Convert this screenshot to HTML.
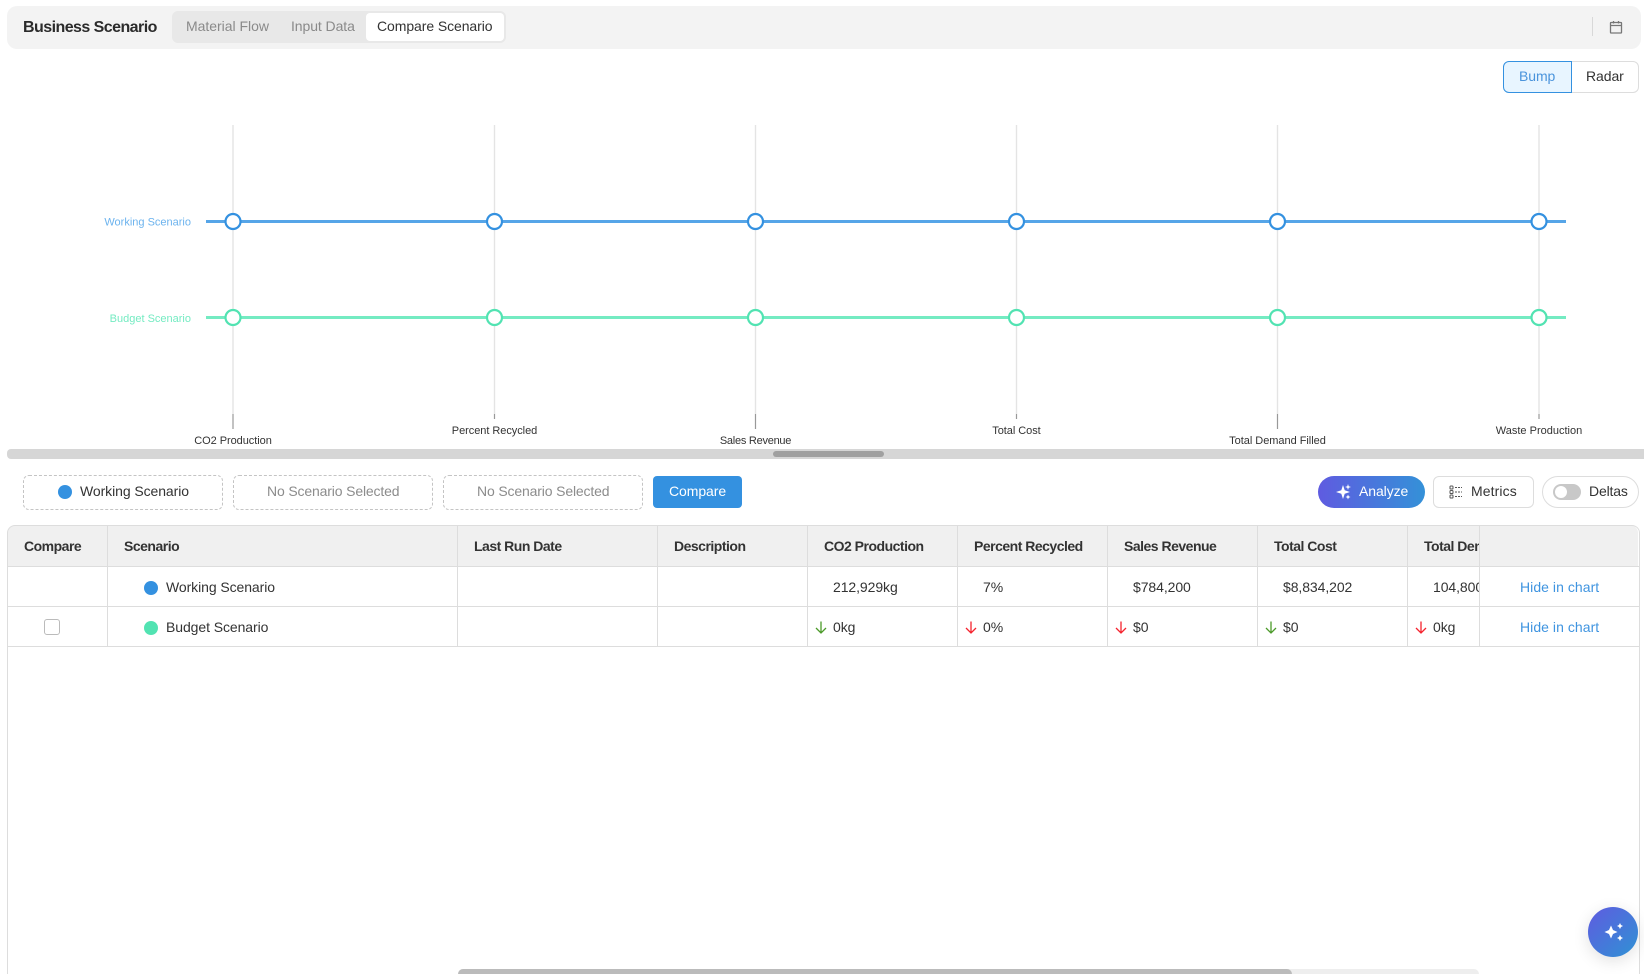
<!DOCTYPE html>
<html lang="en">
<head>
<meta charset="utf-8">
<title>Business Scenario</title>
<style>
html,body{margin:0;padding:0;background:#fff;width:1644px;height:974px;overflow:hidden;}
body{position:relative;font-family:"Liberation Sans",Arial,sans-serif;font-size:14px;color:#333;}
#w{position:absolute;left:0;top:0;width:1644px;height:974px;overflow:hidden;}
.a{position:absolute;}
.t{position:absolute;white-space:nowrap;line-height:20px;height:20px;letter-spacing:-.08px;}
.th{font-weight:bold;letter-spacing:-.5px;color:#333;}
.dash{position:absolute;top:475px;height:33px;border:1px dashed #c4c4c4;border-radius:6px;}
.h{position:absolute;background:#ddd;height:1px;}
.v{position:absolute;background:#ddd;width:1px;}
.dot{position:absolute;width:14px;height:14px;border-radius:50%;}
svg{position:absolute;overflow:visible;}
</style>
</head>
<body>
<div id="w">
<!-- Top bar -->
<div class="a" style="left:7px;top:6px;width:1634px;height:43px;background:#f3f3f3;border-radius:10px;"></div>
<div class="t" style="left:23px;top:18px;font-size:16px;font-weight:bold;letter-spacing:-.55px;color:#2b2b2b;">Business Scenario</div>
<div class="a" style="left:172px;top:11px;width:334px;height:32px;background:#e8e8e8;border-radius:6px;"></div>
<div class="a" style="left:366px;top:13px;width:138px;height:28px;background:#fff;border-radius:4px;"></div>
<div class="t" style="left:186px;top:16px;color:#8a8a8a;letter-spacing:-.02px;">Material Flow</div>
<div class="t" style="left:291px;top:16px;color:#8a8a8a;">Input Data</div>
<div class="t" style="left:377px;top:16px;color:#333;">Compare Scenario</div>
<div class="a" style="left:1592px;top:17px;width:1px;height:19px;background:#d8d8d8;"></div>
<svg style="left:1609px;top:20px;" width="14" height="14" viewBox="0 0 14 14" fill="none" stroke="#777" stroke-width="1.3">
  <rect x="1.500" y="2.500" width="11" height="10.500" rx=".5"/>
  <path d="M1.500 5.500H12.500M4.500 1V3.500M9.500 1V3.500"/>
</svg>

<!-- Bump/Radar -->
<div class="a" style="left:1572px;top:61px;width:66px;height:30px;border:1px solid #ddd;border-left:0;border-radius:0 6px 6px 0;"></div>
<div class="a" style="left:1503px;top:61px;width:67px;height:30px;border:1px solid #3491e0;background:#e8f5ff;border-radius:6px 0 0 6px;"></div>
<div class="t" style="left:1519px;top:66px;color:#4a94dc;">Bump</div>
<div class="t" style="left:1586px;top:66px;color:#333;">Radar</div>

<!-- Chart -->
<svg style="left:0;top:0;" width="1644" height="450" viewBox="0 0 1644 450" font-family="Liberation Sans, Arial, sans-serif">
  <g stroke="#e4e4e4" stroke-width="1.4">
    <path d="M233 125V414M494.500 125V414M755.500 125V414M1016.500 125V414M1277.500 125V414M1539 125V414"/>
  </g>
  <g stroke="#999" stroke-width="1.2">
    <path d="M233 414V429M494.500 414V419M755.500 414V429M1016.500 414V419M1277.500 414V429M1539 414V419"/>
  </g>
  <path d="M206 221.500H1566" stroke="#56a5e8" stroke-width="3"/>
  <path d="M206 317.500H1566" stroke="#74ebc2" stroke-width="3"/>
  <g fill="#fff" stroke="#3491e0" stroke-width="2.2">
    <circle cx="233" cy="221.500" r="7.500"/><circle cx="494.500" cy="221.500" r="7.500"/><circle cx="755.500" cy="221.500" r="7.500"/><circle cx="1016.500" cy="221.500" r="7.500"/><circle cx="1277.500" cy="221.500" r="7.500"/><circle cx="1539" cy="221.500" r="7.500"/>
  </g>
  <g fill="#fff" stroke="#52e3b2" stroke-width="2.2">
    <circle cx="233" cy="317.500" r="7.500"/><circle cx="494.500" cy="317.500" r="7.500"/><circle cx="755.500" cy="317.500" r="7.500"/><circle cx="1016.500" cy="317.500" r="7.500"/><circle cx="1277.500" cy="317.500" r="7.500"/><circle cx="1539" cy="317.500" r="7.500"/>
  </g>
  <g font-size="11" text-anchor="end">
    <text x="191" y="225.500" fill="#6cb3ee">Working Scenario</text>
    <text x="191" y="322" fill="#74ebc2">Budget Scenario</text>
  </g>
  <g font-size="11" text-anchor="middle" fill="#333">
    <text x="233" y="444" letter-spacing="-.05">CO2 Production</text>
    <text x="494.500" y="434" letter-spacing="-.05">Percent Recycled</text>
    <text x="755.500" y="444" letter-spacing="-.25">Sales Revenue</text>
    <text x="1016.500" y="434" letter-spacing="-.05">Total Cost</text>
    <text x="1277.500" y="444" letter-spacing="-.03">Total Demand Filled</text>
    <text x="1539" y="434">Waste Production</text>
  </g>
</svg>

<!-- Chart scrollbar -->
<div class="a" style="left:7px;top:449px;width:1637px;height:10px;background:#d6d6d6;border-radius:4px 0 0 4px;"></div>
<div class="a" style="left:773px;top:451px;width:111px;height:6px;background:#a0a0a0;border-radius:3px;"></div>

<!-- Controls -->
<div class="dash" style="left:23px;width:198px;"></div>
<div class="dot" style="left:58px;top:485px;background:#3491e0;"></div>
<div class="t" style="left:80px;top:481px;color:#333;">Working Scenario</div>
<div class="dash" style="left:233px;width:198px;"></div>
<div class="t" style="left:267px;top:481px;color:#8c8c8c;letter-spacing:-.15px;">No Scenario Selected</div>
<div class="dash" style="left:443px;width:198px;"></div>
<div class="t" style="left:477px;top:481px;color:#8c8c8c;letter-spacing:-.15px;">No Scenario Selected</div>
<div class="a" style="left:653px;top:476px;width:89px;height:32px;background:#3491e0;border-radius:4px;"></div>
<div class="t" style="left:669px;top:481px;color:#fff;">Compare</div>

<div class="a" style="left:1318px;top:476px;width:107px;height:32px;border-radius:16px;background:linear-gradient(90deg,#5f5be0,#3491d8);"></div>
<svg style="left:1335px;top:484px;" width="17" height="17" viewBox="0 0 17 17" fill="#fff">
  <path d="M8 1L9.700 6.300L15 8L9.700 9.700L8 15L6.300 9.700L1 8L6.300 6.300Z"/>
  <path d="M13 0L13.700 2.300L16 3L13.700 3.700L13 6L12.300 3.700L10 3L12.300 2.300Z"/>
  <path d="M13 10.500L13.700 12.300L15.500 13L13.700 13.700L13 15.500L12.300 13.700L10.500 13L12.300 12.300Z"/>
</svg>
<div class="t" style="left:1359px;top:481px;color:#fff;">Analyze</div>

<div class="a" style="left:1433px;top:476px;width:99px;height:30px;border:1px solid #ddd;border-radius:6px;"></div>
<svg style="left:1449px;top:485px;" width="14" height="14" viewBox="0 0 14 14" fill="none" stroke="#555" stroke-width="1">
  <rect x="1" y="1" width="3" height="3" rx=".8"/><rect x="1" y="5.500" width="3" height="3" rx=".8"/><rect x="1" y="10" width="3" height="3" rx=".8"/>
  <path d="M6 2.500H13M6 7H13M6 11.500H13" stroke-dasharray="2 1"/>
</svg>
<div class="t" style="left:1471px;top:481px;letter-spacing:.1px;">Metrics</div>

<div class="a" style="left:1542px;top:476px;width:95px;height:30px;border:1px solid #ddd;border-radius:16px;"></div>
<div class="a" style="left:1553px;top:484px;width:28px;height:16px;background:#c8c8c8;border-radius:8px;"></div>
<div class="a" style="left:1555px;top:486px;width:12px;height:12px;background:#fff;border-radius:50%;"></div>
<div class="t" style="left:1589px;top:481px;letter-spacing:-.15px;">Deltas</div>

<!-- Table -->
<div class="a" style="left:8px;top:525px;width:1630px;height:41px;background:#f0f0f0;border-radius:8px 8px 0 0;"></div>
<div class="a" style="left:7px;top:525px;width:1631px;height:449px;border:1px solid #ddd;border-bottom:0;border-radius:8px 8px 0 0;"></div>
<div class="h" style="left:8px;top:566px;width:1631px;"></div>
<div class="h" style="left:8px;top:606px;width:1631px;"></div>
<div class="h" style="left:8px;top:646px;width:1631px;"></div>
<div class="v" style="left:107px;top:526px;height:120px;"></div>
<div class="v" style="left:457px;top:526px;height:120px;"></div>
<div class="v" style="left:657px;top:526px;height:120px;"></div>
<div class="v" style="left:807px;top:526px;height:120px;"></div>
<div class="v" style="left:957px;top:526px;height:120px;"></div>
<div class="v" style="left:1107px;top:526px;height:120px;"></div>
<div class="v" style="left:1257px;top:526px;height:120px;"></div>
<div class="v" style="left:1407px;top:526px;height:120px;"></div>
<div class="v" style="left:1479px;top:526px;height:120px;"></div>

<div class="t th" style="left:24px;top:536px;">Compare</div>
<div class="t th" style="left:124px;top:536px;">Scenario</div>
<div class="t th" style="left:474px;top:536px;">Last Run Date</div>
<div class="t th" style="left:674px;top:536px;">Description</div>
<div class="t th" style="left:824px;top:536px;">CO2 Production</div>
<div class="t th" style="left:974px;top:536px;">Percent Recycled</div>
<div class="t th" style="left:1124px;top:536px;">Sales Revenue</div>
<div class="t th" style="left:1274px;top:536px;">Total Cost</div>
<div class="a" style="left:1424px;top:536px;width:55px;height:20px;overflow:hidden;"><div class="t th" style="left:0;top:0;">Total Demand Filled</div></div>

<div class="dot" style="left:144px;top:581px;background:#3491e0;"></div>
<div class="t" style="left:166px;top:577px;">Working Scenario</div>
<div class="t" style="left:833px;top:577px;">212,929kg</div>
<div class="t" style="left:983px;top:577px;">7%</div>
<div class="t" style="left:1133px;top:577px;">$784,200</div>
<div class="t" style="left:1283px;top:577px;">$8,834,202</div>
<div class="a" style="left:1433px;top:577px;width:46px;height:20px;overflow:hidden;"><div class="t" style="left:0;top:0;">104,800</div></div>
<div class="t" style="left:1520px;top:577px;color:#3f94e0;letter-spacing:.05px;">Hide in chart</div>

<div class="a" style="left:44px;top:619px;width:14px;height:14px;border:1px solid #bbb;border-radius:3px;background:#fff;"></div>
<div class="dot" style="left:144px;top:621px;background:#52e3b2;"></div>
<div class="t" style="left:166px;top:617px;">Budget Scenario</div>
<svg style="left:815px;top:621px;" width="12" height="13" viewBox="0 0 12 13" fill="none" stroke="#4c9a2a" stroke-width="1.300"><path d="M6 .5V12M1 7L6 12L11 7"/></svg>
<div class="t" style="left:833px;top:617px;">0kg</div>
<svg style="left:965px;top:621px;" width="12" height="13" viewBox="0 0 12 13" fill="none" stroke="#f5222d" stroke-width="1.300"><path d="M6 .5V12M1 7L6 12L11 7"/></svg>
<div class="t" style="left:983px;top:617px;">0%</div>
<svg style="left:1115px;top:621px;" width="12" height="13" viewBox="0 0 12 13" fill="none" stroke="#f5222d" stroke-width="1.300"><path d="M6 .5V12M1 7L6 12L11 7"/></svg>
<div class="t" style="left:1133px;top:617px;">$0</div>
<svg style="left:1265px;top:621px;" width="12" height="13" viewBox="0 0 12 13" fill="none" stroke="#4c9a2a" stroke-width="1.300"><path d="M6 .5V12M1 7L6 12L11 7"/></svg>
<div class="t" style="left:1283px;top:617px;">$0</div>
<svg style="left:1415px;top:621px;" width="12" height="13" viewBox="0 0 12 13" fill="none" stroke="#f5222d" stroke-width="1.300"><path d="M6 .5V12M1 7L6 12L11 7"/></svg>
<div class="t" style="left:1433px;top:617px;">0kg</div>
<div class="t" style="left:1520px;top:617px;color:#3f94e0;letter-spacing:.05px;">Hide in chart</div>

<!-- Table scrollbar -->
<div class="a" style="left:458px;top:969px;width:1021px;height:5px;background:#eee;border-radius:5px 5px 0 0;"></div>
<div class="a" style="left:458px;top:969px;width:834px;height:5px;background:#bbb;border-radius:5px 5px 0 0;"></div>

<!-- FAB -->
<div class="a" style="left:1588px;top:907px;width:50px;height:50px;border-radius:50%;background:linear-gradient(135deg,#5f5be0,#2f92d4);box-shadow:0 4px 16px rgba(0,0,0,.12);"></div>
<svg style="left:1603px;top:923px;" width="20" height="20" viewBox="0 0 20 20" fill="#fff">
  <path d="M8 2.500L10 7L14.500 9L10 11L8 15.500L6 11L1.500 9L6 7Z"/>
  <path d="M17 0L18 2L20 3L18 4L17 6L16 4L14 3L16 2Z"/>
  <path d="M17 12L18 14L20 15L18 16L17 18L16 16L14 15L16 14Z"/>
</svg>
</div>
</body>
</html>
